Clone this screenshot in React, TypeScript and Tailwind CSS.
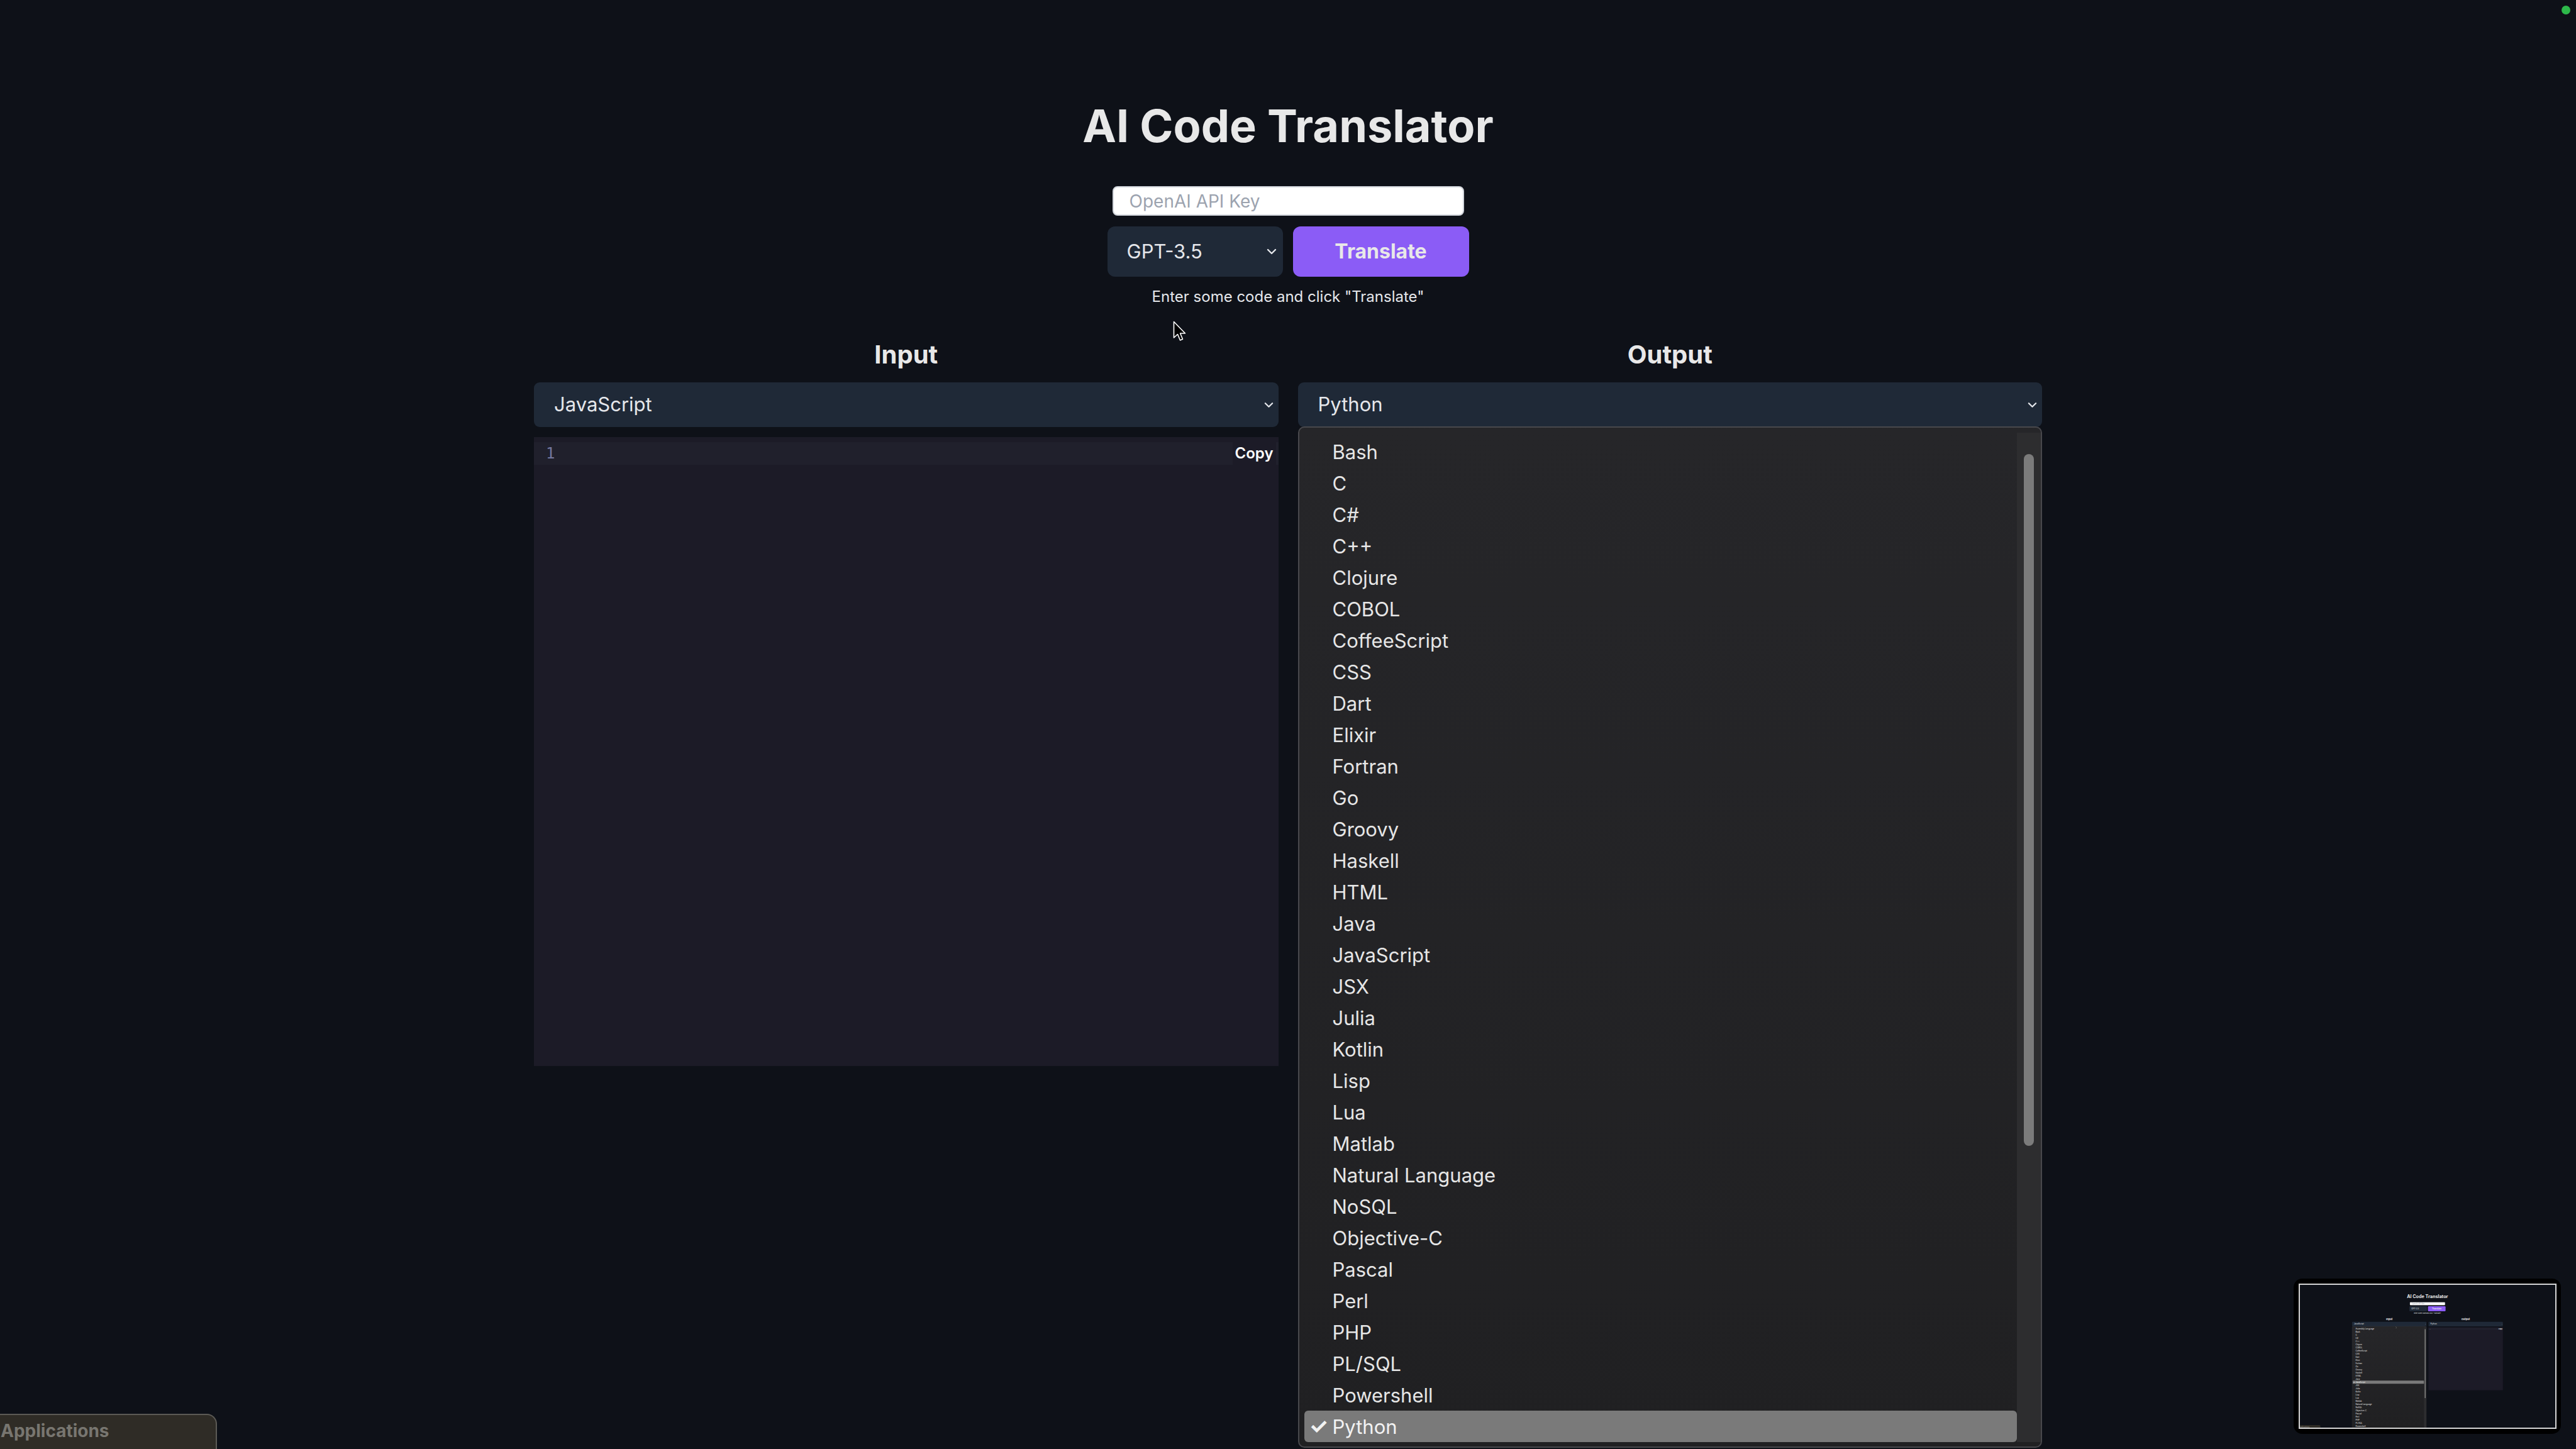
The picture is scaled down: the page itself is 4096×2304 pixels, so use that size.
import React from 'react'

// languages shown in the native select popup
const LANGUAGES = [
  'Assembly Language',
  'Bash',
  'C',
  'C#',
  'C++',
  'Clojure',
  'COBOL',
  'CoffeeScript',
  'CSS',
  'Dart',
  'Elixir',
  'Fortran',
  'Go',
  'Groovy',
  'Haskell',
  'HTML',
  'Java',
  'JavaScript',
  'JSX',
  'Julia',
  'Kotlin',
  'Lisp',
  'Lua',
  'Matlab',
  'Natural Language',
  'NoSQL',
  'Objective-C',
  'Pascal',
  'Perl',
  'PHP',
  'PL/SQL',
  'Powershell',
  'Python',
]

const Chevron = ({ className }: { className?: string }) => (
  <svg viewBox="0 0 16 10" className={className} fill="none">
    <polyline points="2,2 8,8 14,2" stroke="#e5e7eb" strokeWidth="2.4" strokeLinecap="round" strokeLinejoin="round" />
  </svg>
)

type DropdownProps = {
  items: string[]
  selected: string
}

const Dropdown = ({ items, selected }: DropdownProps) => (
  <div className="absolute left-0 right-0 top-[70px] h-[1624px] z-10 flex rounded-[10px] border-2 border-[#48484c] bg-gradient-to-b from-[#262629] to-[#202022] overflow-hidden">
    <ul className="flex-1 pt-[13px] pl-[8px]">
      {items.map((lang) => (
        <li
          key={lang}
          className={`relative h-[50px] flex items-center pl-[45px] text-[31px] leading-none text-[#e6e6e6] rounded-[6px] ${
            lang === selected ? 'bg-[#7a7a7a] text-[#f2f2f2]' : ''
          }`}
        >
          {lang === selected && <span className="absolute left-[8px] text-[34px] font-bold">✓</span>}
          {lang}
        </li>
      ))}
    </ul>
    <div className="w-[38px] mt-[8px] mb-[7px] bg-[#2d2d2f] flex justify-center">
      <div className="mt-[34px] w-[16px] h-[1100px] rounded-full bg-[#7b7b7b]" />
    </div>
  </div>
)

const CodeArea = () => (
  <div className="relative mt-[16px] h-[1000px] bg-[#1c1b27]">
    <div className="mt-[8px] h-[36px] bg-[#20202c] flex items-center pl-[19px] font-['DejaVu_Sans_Mono',monospace] text-[24px] text-[#7478a0]">
      1
    </div>
    <button className="absolute right-[4px] top-[8px] h-[36px] px-[4px] bg-[#1c1b27] text-[24px] font-semibold text-white leading-none">
      Copy
    </button>
  </div>
)

type ColumnProps = {
  label: string
  value: string
  open: boolean
  items: string[]
}

const Column = ({ label, value, open, items }: ColumnProps) => (
  <div className="flex flex-col">
    <h2 className="h-[40px] text-[40px] leading-none font-bold text-center text-[#e8e8e8]">{label}</h2>
    <div className="relative mt-[24px]">
      <div className="h-[71px] rounded-[9px] bg-[#1f2937] flex items-center justify-between pl-[32px] pr-[8px] text-[31px] text-[#e5e7eb]">
        <span>{value}</span>
        <Chevron className="w-[15px] h-[10px]" />
      </div>
      {open && <Dropdown items={items} selected={value} />}
    </div>
    <CodeArea />
  </div>
)

const Cursor = ({ className }: { className: string }) => (
  <svg viewBox="0 0 22 34" className={`absolute w-[22px] h-[34px] z-20 ${className}`}>
    <path d="M1.5 1.5 L1.5 27 L7.5 21.5 L11.5 31 L15.5 29.2 L11.6 20 L19.5 20 Z" fill="#000" stroke="#fff" strokeWidth="1.6" strokeLinejoin="round" />
  </svg>
)

const Screen = ({ mini = false }: { mini?: boolean }) => (
  <div className="relative w-[4096px] h-[2304px] overflow-hidden bg-[#0e1118] font-['Inter',sans-serif]">
    <main className="flex flex-col items-center">
      <h1 className="mt-[164px] text-[72px] leading-none font-bold text-[#e8e8e8]">AI Code Translator</h1>

      <input
        readOnly
        placeholder="OpenAI API Key"
        className="mt-[60px] w-[559px] h-[47px] rounded-[8px] border-2 border-[#d1d5db] bg-white pl-[25px] text-[28px] text-black placeholder:text-[#9ca3af] outline-none"
      />

      <div className="mt-[17px] flex gap-[16px]">
        <div className="w-[279px] h-[80px] rounded-[12px] bg-[#1f2937] flex items-center justify-between pl-[31px] pr-[10px] text-[31px] text-[#e5e7eb]">
          <span>GPT-3.5</span>
          <Chevron className="w-[16px] h-[10px]" />
        </div>
        <button className="w-[280px] h-[80px] rounded-[12px] bg-[#8b5cf6] text-[32px] font-bold text-[#e8e8e8]">
          Translate
        </button>
      </div>

      <p className="mt-[20px] text-[24px] leading-none text-[#e5e7eb]">Enter some code and click "Translate"</p>

      <div className="mt-[60px] w-[2398px] grid grid-cols-2 gap-[31px]">
        <Column label="Input" value="JavaScript" open={mini} items={LANGUAGES.slice(0, 32)} />
        <Column label="Output" value="Python" open={!mini} items={LANGUAGES.slice(1, 33)} />
      </div>
    </main>

    {/* dock stack */}
    <div className="absolute left-0 bottom-0 w-[345px] h-[56px] rounded-tr-[16px] border-t-2 border-r-2 border-[#5c5a55] bg-[#2f2c26] pt-[11px] pl-[1px] overflow-hidden">
      <span className="block text-[28px] leading-none font-bold text-[#787670]">Applications</span>
    </div>

    <Cursor className={mini ? 'left-[1540px] top-[680px]' : 'left-[1865px] top-[510px]'} />

    <div className="absolute top-[9px] right-[9px] w-[14px] h-[14px] rounded-full bg-[#2db84a]" />

    {!mini && <Thumbnail />}
  </div>
)

const Thumbnail = () => (
  <div className="absolute right-[24px] bottom-[24px] w-[425px] h-[247px] rounded-[14px] bg-black flex items-center justify-center z-30">
    <div className="relative w-[410px] h-[231px] overflow-hidden">
      <div className="origin-top-left scale-[0.1]">
        <Screen mini />
      </div>
      <div className="absolute inset-0 border-2 border-[#d4d4d4]" />
    </div>
  </div>
)

const App = () => <Screen />

export default App
